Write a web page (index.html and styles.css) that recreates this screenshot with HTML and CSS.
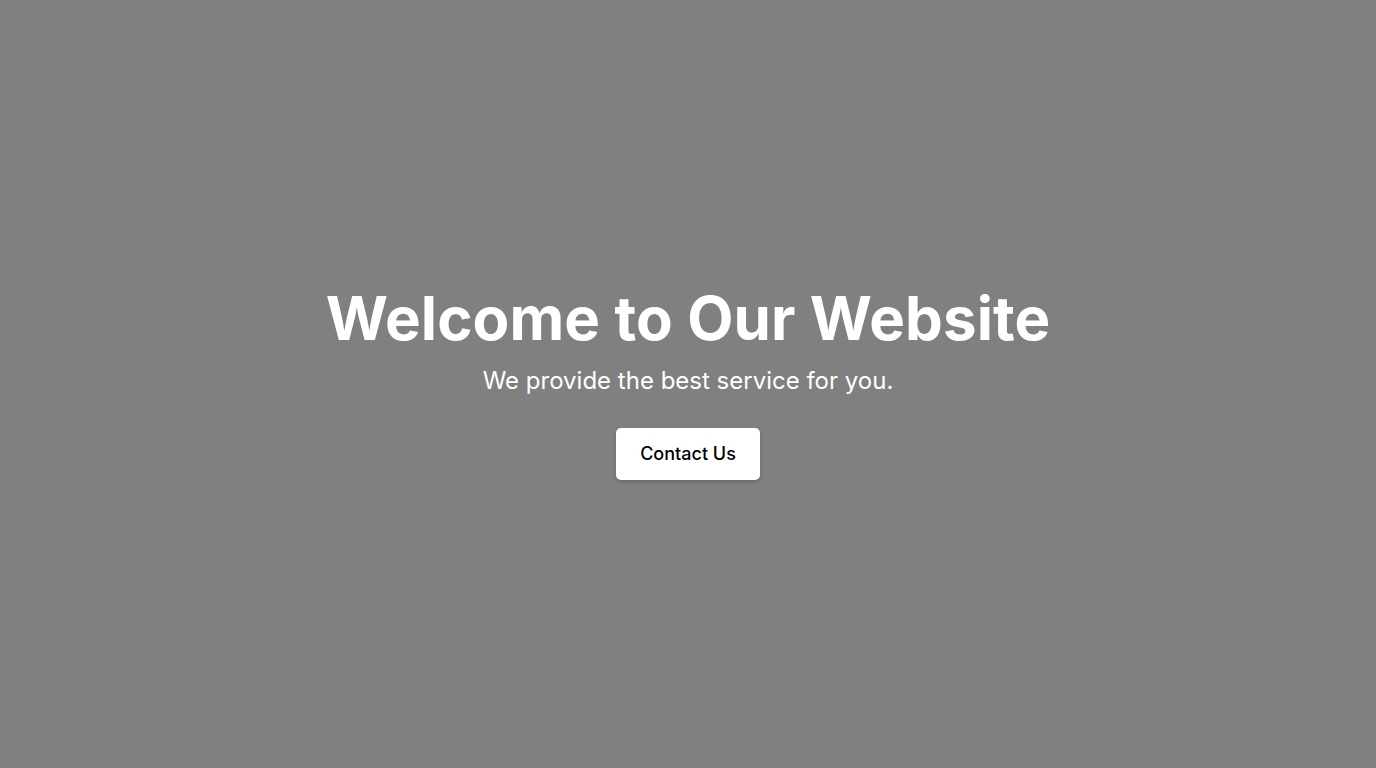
FILE: index.html
```html
<!DOCTYPE html>
<html lang="en">
<head>
<meta charset="utf-8">
<title>Welcome</title>
<link rel="stylesheet" href="styles.css">
</head>
<body>
<main class="hero">
  <h1 class="hero-title">Welcome to Our Website</h1>
  <p class="hero-subtitle">We provide the best service for you.</p>
  <button class="hero-button" type="button">Contact Us</button>
</main>
</body>
</html>
```
FILE: styles.css
```css
* { box-sizing: border-box; }
html, body { margin: 0; padding: 0; }
body {
  background: #808080;
  font-family: Inter, "Noto Sans", sans-serif;
  color: #fff;
}
.hero {
  min-height: 100vh;
  padding-bottom: 6px;
  display: flex;
  flex-direction: column;
  align-items: center;
  justify-content: center;
  text-align: center;
}
.hero-title {
  margin: 0 0 9px;
  font-size: 60px;
  font-weight: 700;
  line-height: 72px;
  letter-spacing: 0.1px;
}
.hero-subtitle {
  margin: 0 0 29px;
  font-size: 24px;
  line-height: 36px;
}
.hero-button {
  font-family: inherit;
  font-size: 18px;
  font-weight: 500;
  color: #000;
  background: #fff;
  border: none;
  border-radius: 5px;
  padding: 14px 24px;
  line-height: 24px;
  box-shadow: 0 2px 4px rgba(0,0,0,0.2);
  cursor: pointer;
}
```
